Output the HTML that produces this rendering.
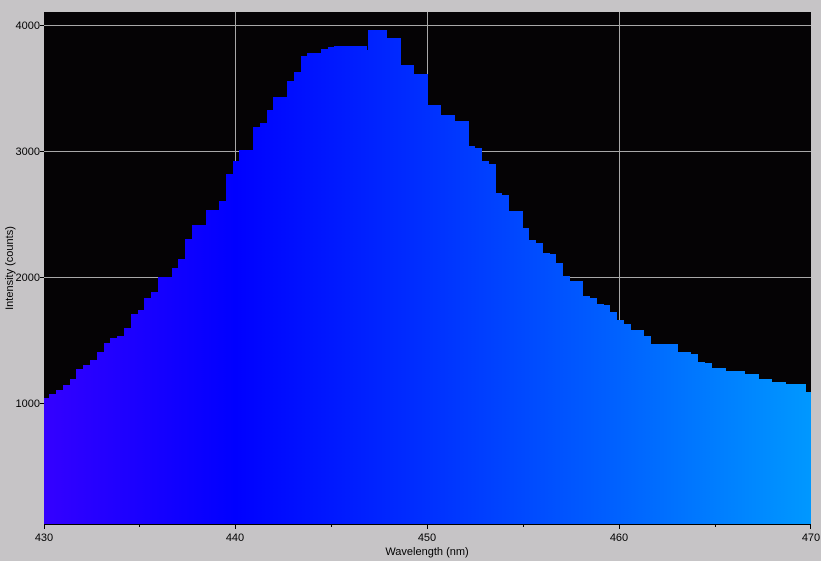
<!DOCTYPE html>
<html><head><meta charset="utf-8"><style>
html,body{margin:0;padding:0;}
body{width:821px;height:561px;background:#c6c4c6;overflow:hidden;font-family:"Liberation Sans",sans-serif;}
svg{display:block}
text{font-family:"Liberation Sans",sans-serif;font-size:11px;fill:#000}
</style></head><body>
<svg width="821" height="561" viewBox="0 0 821 561">
<defs>
<linearGradient id="g" x1="44" x2="811" y1="0" y2="0" gradientUnits="userSpaceOnUse">
<stop offset="0" stop-color="#3400ff"/>
<stop offset="0.25" stop-color="#0000ff"/>
<stop offset="0.5" stop-color="#0030ff"/>
<stop offset="0.75" stop-color="#0062ff"/>
<stop offset="1" stop-color="#0098ff"/>
</linearGradient>
</defs>
<rect x="44" y="12" width="767" height="512" fill="#050305"/>
<g stroke="#a8a8a8" stroke-width="1">
<line x1="235.5" y1="12" x2="235.5" y2="524"/>
<line x1="427.5" y1="12" x2="427.5" y2="524"/>
<line x1="619.5" y1="12" x2="619.5" y2="524"/>
<line x1="44" y1="25.5" x2="811" y2="25.5"/>
<line x1="44" y1="151.5" x2="811" y2="151.5"/>
<line x1="44" y1="277.5" x2="811" y2="277.5"/>
<line x1="44" y1="403.5" x2="811" y2="403.5"/>
</g>
<path fill="url(#g)" d="M44 524 V398 H49 V394 H56 V390 H63 V385 H70 V379 H76 V369 H83 V365 H90 V360 H97 V352 H104 V343 H110 V338 H117 V336 H124 V328 H131 V314 H138 V310 H144 V298 H151 V292 H158 V277 H172 V268 H178 V259 H185 V239 H192 V225 H206 V210 H219 V201 H226 V174 H233 V161 H239 V150 H253 V127 H260 V123 H267 V110 H273 V97 H287 V81 H294 V72 H301 V56 H307 V53 H321 V49 H328 V47 H334 V46 H367 V50 H368 V30 H387 V38 H401 V65 H414 V74 H428 V105 H441 V115 H455 V121 H469 V146 H475 V148 H482 V161 H489 V164 H496 V193 H502 V195 H509 V211 H523 V228 H529 V240 H536 V243 H543 V253 H550 V254 H556 V263 H563 V276 H570 V281 H583 V296 H590 V298 H597 V304 H604 V305 H610 V312 H617 V320 H624 V324 H631 V330 H644 V336 H651 V344 H678 V352 H691 V354 H698 V362 H705 V363 H712 V368 H726 V371 H745 V374 H759 V379 H772 V382 H786 V384 H806 V392 H811 V524 Z"/>
<g stroke="#000" stroke-width="1">
<line x1="44" y1="524.5" x2="811" y2="524.5"/>
<line x1="44.5" y1="524" x2="44.5" y2="529"/>
<line x1="139.5" y1="524" x2="139.5" y2="527"/>
<line x1="235.5" y1="524" x2="235.5" y2="529"/>
<line x1="331.5" y1="524" x2="331.5" y2="527"/>
<line x1="427.5" y1="524" x2="427.5" y2="529"/>
<line x1="523.5" y1="524" x2="523.5" y2="527"/>
<line x1="619.5" y1="524" x2="619.5" y2="529"/>
<line x1="715.5" y1="524" x2="715.5" y2="527"/>
<line x1="810.5" y1="524" x2="810.5" y2="529"/>
<line x1="40" y1="25.5" x2="44" y2="25.5"/>
<line x1="40" y1="151.5" x2="44" y2="151.5"/>
<line x1="40" y1="277.5" x2="44" y2="277.5"/>
<line x1="40" y1="403.5" x2="44" y2="403.5"/>
</g>
<g text-anchor="end">
<text x="40" y="29">4000</text>
<text x="40" y="155">3000</text>
<text x="40" y="281">2000</text>
<text x="40" y="407">1000</text>
</g>
<g text-anchor="middle">
<text x="44" y="541">430</text>
<text x="235" y="541">440</text>
<text x="427" y="541">450</text>
<text x="619" y="541">460</text>
<text x="811" y="541">470</text>
<text x="427" y="555">Wavelength (nm)</text>
<text transform="translate(13 268) rotate(-90)">Intensity (counts)</text>
</g>
</svg>
</body></html>
